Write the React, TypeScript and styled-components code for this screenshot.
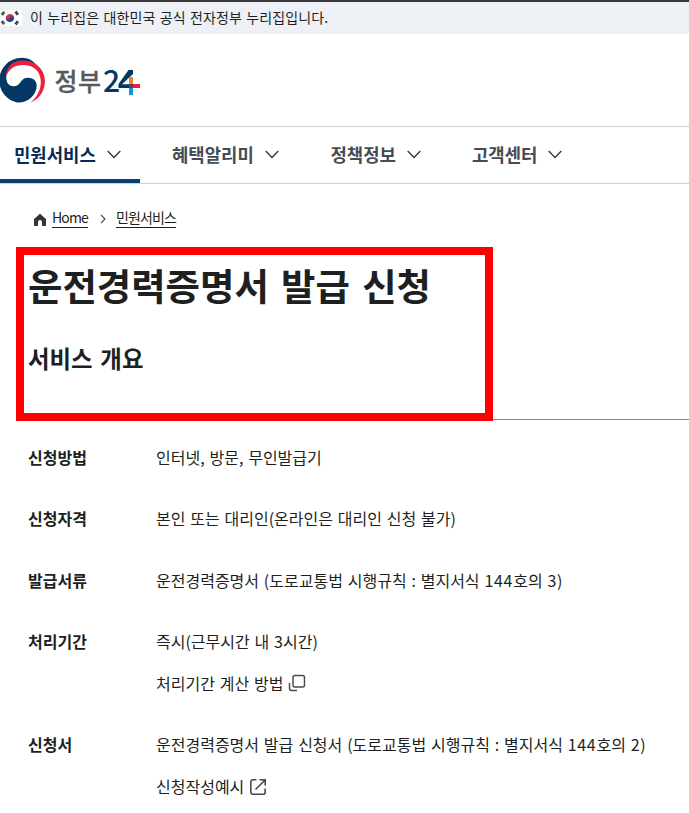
import React from "react";
import styled, { createGlobalStyle } from "styled-components";

const Global = createGlobalStyle`
  * { box-sizing: border-box; }
  body {
    margin: 0;
    background: #fff;
    color: #1e1f21;
    font-family: "Noto Sans CJK KR", sans-serif;
    overflow: hidden;
  }
  h1, h2, dl, dt, dd, p { margin: 0; }
`;

const Page = styled.div`
  width: 689px;
  height: 813px;
  overflow: hidden;
  display: flex;
  flex-direction: column;
`;

const GovBar = styled.div`
  height: 34px;
  flex: none;
  border-top: 2px solid #39393b;
  background: #edf1f5;
  display: flex;
  align-items: center;
  gap: 8px;
  font-size: 14px;
  line-height: 20px;
  letter-spacing: 0.12px;
  word-spacing: 1px;
  white-space: nowrap;
`;

const GovText = styled.span`
  padding-bottom: 2px;
`;

const Header = styled.header`
  height: 92px;
  flex: none;
  padding-top: 16px;
`;

const Nav = styled.nav`
  height: 58px;
  flex: none;
  display: flex;
  border-top: 1px solid #cdd1d5;
  border-bottom: 1px solid #cdd1d5;
`;

const NavItem = styled.a<{ $active?: boolean; $width: number }>`
  width: ${(p) => p.$width}px;
  height: 56px;
  padding: 2px 0 ${(p) => (p.$active ? 0 : 4)}px 14px;
  border-bottom: ${(p) => (p.$active ? "4px solid #083f75" : "0")};
  color: ${(p) => (p.$active ? "#052b57" : "#464c53")};
  display: flex;
  align-items: center;
  gap: 11px;
  font-size: 17.8px;
  font-weight: 700;
  line-height: 26px;
  white-space: nowrap;
`;

const NavGap = styled.span`
  width: 18px;
`;

const Breadcrumb = styled.div`
  height: 63px;
  flex: none;
  padding: 24px 0 0 33px;
  display: flex;
  align-items: flex-start;
`;

const Crumb = styled.a<{ $spacing: number }>`
  height: 20px;
  border-bottom: 1px solid #1e2124;
  font-size: 14px;
  line-height: 19px;
  letter-spacing: ${(p) => p.$spacing}px;
  white-space: nowrap;
`;

const HomeIcon = styled.svg`
  margin: 5px 5px 0 0;
`;

const CrumbArrow = styled.svg`
  margin: 6px 10px 0 12px;
`;

const Heading = styled.section`
  position: relative;
  height: 173px;
  flex: none;
  margin-left: 28px;
  padding-top: 13px;
  border-bottom: 1px solid #8a8a8a;
`;

const Highlight = styled.div`
  position: absolute;
  left: -12px;
  top: 0;
  width: 477px;
  height: 174px;
  border: 8px solid #ff0000;
`;

const Title = styled.h1`
  font-size: 37.4px;
  line-height: 50px;
  font-weight: 700;
  word-spacing: 3.8px;
  white-space: nowrap;
`;

const Subtitle = styled.h2`
  margin-top: 31px;
  font-size: 23.4px;
  line-height: 34px;
  font-weight: 700;
  word-spacing: 2.5px;
`;

const Details = styled.dl`
  padding: 21.8px 0 0 28px;
  display: flex;
  flex-direction: column;
  gap: 31.4px;
`;

const Row = styled.div`
  display: grid;
  grid-template-columns: 128px 1fr;
  font-size: 16px;
  line-height: 30px;
`;

const Term = styled.dt`
  font-weight: 700;
`;

const Description = styled.dd`
  display: flex;
  flex-direction: column;
  gap: 12px;
  word-spacing: 1.25px;
  white-space: nowrap;
`;

const Digits = styled.span`
  letter-spacing: 0.7px;
`;

const LinkLine = styled.a`
  display: flex;
  align-items: center;
  gap: 5px;

  svg {
    margin-top: 1px;
  }
`;

const Flag = () => (
  <svg width="22" height="16" viewBox="0 0 22 16">
    <rect width="22" height="16" fill="#fff" />
    <g transform="rotate(20 10 8)">
      <path d="M6 8a4 4 0 0 1 8 0z" fill="#d6303c" />
      <path d="M6 8a4 4 0 0 0 8 0z" fill="#0b4ca0" />
      <circle cx="8" cy="8" r="2" fill="#d6303c" />
      <circle cx="12" cy="8" r="2" fill="#0b4ca0" />
    </g>
    <g stroke="#222" strokeWidth="2.8" strokeDasharray="1.5 .4">
      <path d="M2 4.8 4.400 1.600M15.600 1.600 18 4.800M2 11.200l2.400 3.200M15.600 14.400 18 11.200" />
    </g>
  </svg>
);

const Logo = () => (
  <svg width="145" height="60" viewBox="0 50 145 60">
    <path
      d="M21.800 57.800A22.500 22.500 0 0 0 -.7 80.300A22.500 22.500 0 0 0 17 102.500C28 103.500 36.700 94.500 36.700 85.500C36.700 80.500 33 77.700 28 77.700C20 77.700 21 86.300 13.500 86.300C8.500 86.300 6.200 82 6.200 77C6.200 68 13 61 22.500 61C29 61 34 63.500 37 65.500C33 60.500 28 57.800 21.800 57.800Z"
      fill="#023863"
    />
    <path
      d="M6.200 77C5.500 67 13 60.500 22.500 60.500C35 60.500 44.900 69 44.900 81C44.900 91 39.500 99 30.500 102.500C37 97.500 40.800 90 40.800 82C40.800 71.500 34 65.300 24 65C14.500 64.800 8 69.500 6.200 77Z"
      fill="#ee1f3c"
    />
    <text x="54.500" y="90.500" fontSize="25" fontWeight="500" fill="#58595b" stroke="#58595b" strokeWidth=".3" textLength="46.500">
      정부
    </text>
    <text x="103" y="92" fontSize="30" fontWeight="500" fill="#023863" textLength="16">
      2
    </text>
    <path d="M128.500 70H133V74L122 84.300H129V88H118.500V84Z" fill="#023863" />
    <rect x="129" y="77" width="4" height="7" fill="#f58220" />
    <rect x="133" y="84" width="7" height="4" fill="#ee1f3c" />
    <rect x="129" y="84" width="4" height="4" fill="#6b3560" />
    <rect x="129" y="88" width="4" height="7" fill="#1295d8" />
  </svg>
);

const Chevron = () => (
  <svg width="14" height="9" viewBox="0 0 14 9" fill="none" stroke="#33363d" strokeWidth="1.3">
    <path d="M.7 1 7 7.500 13.300 1" />
  </svg>
);

const CopyIcon = () => (
  <svg width="18" height="18" viewBox="0 0 18 18" fill="none" stroke="#464c53" strokeWidth="1.5">
    <rect x="5" y="1.500" width="11.500" height="11.500" rx="2" />
    <path d="M1.500 9v5.500a2 2 0 0 0 2 2H9" />
  </svg>
);

const OpenIcon = () => (
  <svg width="18" height="18" viewBox="0 0 18 18" fill="none" stroke="#464c53" strokeWidth="1.600">
    <path d="M7.500 1.800H3.800a2 2 0 0 0-2 2v10.400a2 2 0 0 0 2 2h10.400a2 2 0 0 0 2-2V10.500M10.500 1.800h5.700v5.700M16 2 6.500 11.500" />
  </svg>
);

const menu = [
  { label: "민원서비스", width: 140 },
  { label: "혜택알리미", width: 140.5 },
  { label: "정책정보", width: 123.5 },
  { label: "고객센터", width: 123 },
];

const details: { term: string; text: React.ReactNode; link?: string; icon?: React.ReactNode }[] = [
  { term: "신청방법", text: "인터넷, 방문, 무인발급기" },
  { term: "신청자격", text: "본인 또는 대리인(온라인은 대리인 신청 불가)" },
  {
    term: "발급서류",
    text: (
      <>
        운전경력증명서 (도로교통법 시행규칙 : 별지서식 <Digits>144</Digits>호의 <Digits>3</Digits>)
      </>
    ),
  },
  { term: "처리기간", text: "즉시(근무시간 내 3시간)", link: "처리기간 계산 방법", icon: <CopyIcon /> },
  {
    term: "신청서",
    text: (
      <>
        운전경력증명서 발급 신청서 (도로교통법 시행규칙 : 별지서식 <Digits>144</Digits>호의 <Digits>2</Digits>)
      </>
    ),
    link: "신청작성예시",
    icon: <OpenIcon />,
  },
];

export default function App() {
  return (
    <Page>
      <Global />
      <GovBar>
        <Flag />
        <GovText>이 누리집은 대한민국 공식 전자정부 누리집입니다.</GovText>
      </GovBar>
      <Header>
        <Logo />
      </Header>
      <Nav>
        {menu.map((item, i) => (
          <React.Fragment key={item.label}>
            {i > 0 && <NavGap />}
            <NavItem $active={i === 0} $width={item.width}>
              {item.label}
              <Chevron />
            </NavItem>
          </React.Fragment>
        ))}
      </Nav>
      <Breadcrumb>
        <HomeIcon width="14" height="14" viewBox="0 0 14 14">
          <path d="M7 .8 13 6v6.200a.8.8 0 0 1-.8.8H9V9a2 2 0 0 0-4 0v4H1.800a.8.8 0 0 1-.8-.8V6z" fill="#33363d" />
        </HomeIcon>
        <Crumb $spacing={-0.85}>Home</Crumb>
        <CrumbArrow width="6" height="10" viewBox="0 0 6 10" fill="none" stroke="#464c53" strokeWidth="1.100">
          <path d="M1 1 5 5 1 9" />
        </CrumbArrow>
        <Crumb $spacing={-0.9}>민원서비스</Crumb>
      </Breadcrumb>
      <Heading>
        <Title>운전경력증명서 발급 신청</Title>
        <Subtitle>서비스 개요</Subtitle>
        <Highlight />
      </Heading>
      <Details>
        {details.map((row) => (
          <Row key={row.term}>
            <Term>{row.term}</Term>
            <Description>
              <p>{row.text}</p>
              {row.link && (
                <LinkLine>
                  {row.link}
                  {row.icon}
                </LinkLine>
              )}
            </Description>
          </Row>
        ))}
      </Details>
    </Page>
  );
}
